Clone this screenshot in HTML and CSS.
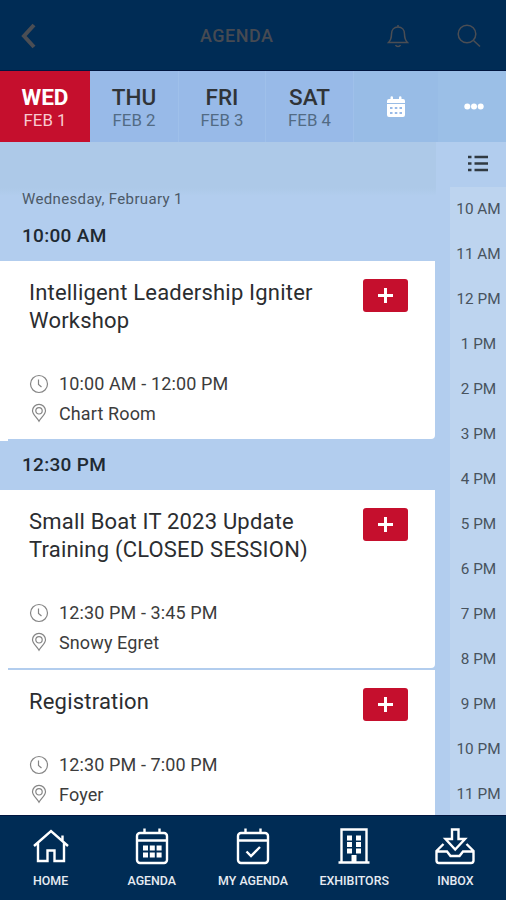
FILE: index.html
```html
<!DOCTYPE html>
<html lang="en">
<head>
    <meta charset="UTF-8">
    <title>Agenda</title>
    <link rel="stylesheet" href="styles.css">
</head>
<body>
    <!-- Shared icons -->
    <svg class="icon-defs" width="0" height="0">
        <symbol id="clock" viewBox="0 0 20 20">
            <circle cx="10" cy="10" r="8.5"/>
            <path d="M9.5 5.5v5l3 2.5"/>
        </symbol>
        <symbol id="pin" viewBox="0 0 20 20">
            <path d="M10 18.3C8 14.5 3.5 11.5 3.5 7.8a6.500 6.500 0 0 1 13 0C16.500 11.500 12 14.500 10 18.300z"/>
            <circle cx="10" cy="7.8" r="3.2"/>
        </symbol>
    </svg>

    <!-- Header -->
    <header>
        <svg class="back" width="16" height="26" viewBox="0 0 16 26"><path d="M13 2L3 13l10 11"/></svg>
        <h1>AGENDA</h1>
        <svg class="bell" width="22" height="24" viewBox="0 0 22 24"><path d="M1.5 18.5c2-2 3-4 3-8.500 0-4 2.500-7 6.500-7s6.500 3 6.500 7c0 4.500 1 6.500 3 8.500zM11 3V1M8.500 21c1 2 4 2 5 0"/></svg>
        <svg class="search" width="24" height="24" viewBox="0 0 24 24"><circle cx="10" cy="10" r="8.8"/><path d="M16.5 16.5l6.500 6"/></svg>
    </header>

    <!-- Day tabs -->
    <nav class="days">
        <a class="day active"><b>WED</b><span>FEB 1</span></a>
        <a class="day"><b>THU</b><span>FEB 2</span></a>
        <a class="day"><b>FRI</b><span>FEB 3</span></a>
        <a class="day"><b>SAT</b><span>FEB 4</span></a>
        <a class="tool">
            <svg width="18" height="21" viewBox="0 0 18 21">
                <path fill="#fff" d="M2 3h1.5V1.500a1.200 1.200 0 0 1 2.500 0V3h6V1.500a1.200 1.200 0 0 1 2.500 0V3H16a2 2 0 0 1 2 2v2H0V5a2 2 0 0 1 2-2zM0 8h18v11a2 2 0 0 1-2 2H2a2 2 0 0 1-2-2z"/>
                <path fill="#98bae8" d="M3 11h2.5v2H3zM7.800 11h2.500v2H7.800zM12.500 11H15v2h-2.500zM3 16h2.500v2H3zM7.800 16h2.500v2H7.800zM12.500 16H15v2h-2.500z"/>
            </svg>
        </a>
        <a class="tool more">
            <svg width="20" height="7" viewBox="0 0 20 7"><circle cx="3.3" cy="3.5" r="3"/><circle cx="10" cy="3.5" r="3"/><circle cx="16.7" cy="3.5" r="3"/></svg>
        </a>
    </nav>

    <main>
        <!-- Session list -->
        <section class="sessions">
            <p class="date">Wednesday, February 1</p>
            <h2>10:00 AM</h2>
            <article class="card">
                <div class="card-top">
                    <h3>Intelligent Leadership Igniter Workshop</h3>
                    <button class="add"><svg width="15" height="15" viewBox="0 0 15 15"><path d="M7.5 0v15M0 7.5h15"/></svg></button>
                </div>
                <p><svg class="meta"><use href="#clock"/></svg>10:00 AM - 12:00 PM</p>
                <p><svg class="meta"><use href="#pin"/></svg>Chart Room</p>
            </article>

            <h2 class="second">12:30 PM</h2>
            <article class="card">
                <div class="card-top">
                    <h3>Small Boat IT 2023 Update Training (CLOSED SESSION)</h3>
                    <button class="add"><svg width="15" height="15" viewBox="0 0 15 15"><path d="M7.5 0v15M0 7.5h15"/></svg></button>
                </div>
                <p><svg class="meta"><use href="#clock"/></svg>12:30 PM - 3:45 PM</p>
                <p><svg class="meta"><use href="#pin"/></svg>Snowy Egret</p>
            </article>
            <article class="card short">
                <div class="card-top">
                    <h3>Registration</h3>
                    <button class="add"><svg width="15" height="15" viewBox="0 0 15 15"><path d="M7.5 0v15M0 7.5h15"/></svg></button>
                </div>
                <p><svg class="meta"><use href="#clock"/></svg>12:30 PM - 7:00 PM</p>
                <p><svg class="meta"><use href="#pin"/></svg>Foyer</p>
            </article>
        </section>

        <!-- Hour rail -->
        <aside>
            <div class="list-btn">
                <svg width="20" height="17" viewBox="0 0 20 17"><path d="M0 2h3.5M0 8.5h3.5M0 15h3.5M6.5 2H20M6.5 8.5H20M6.5 15H20"/></svg>
            </div>
            <ul>
                <li>10 AM</li>
                <li>11 AM</li>
                <li>12 PM</li>
                <li>1 PM</li>
                <li>2 PM</li>
                <li>3 PM</li>
                <li>4 PM</li>
                <li>5 PM</li>
                <li>6 PM</li>
                <li>7 PM</li>
                <li>8 PM</li>
                <li>9 PM</li>
                <li>10 PM</li>
                <li>11 PM</li>
            </ul>
        </aside>
    </main>

    <!-- Bottom navigation -->
    <footer>
        <a>
            <svg viewBox="0 0 40 40"><path d="M3 19L20 4l17 15M7 16v18h9.500V23.500h7V34H33V16M31.500 14V8.500"/></svg>
            HOME
        </a>
        <a>
            <svg viewBox="0 0 40 40"><rect x="5" y="6" width="30" height="30" rx="3"/><path d="M5 13.5h30M12.500 1.500V6M27.500 1.500V6"/><path class="solid" d="M11 18.500h5v5h-5zM17.800 18.500h5v5h-5zM24.600 18.500h5v5h-5zM11 25.500h5v5h-5zM17.800 25.500h5v5h-5zM24.600 25.500h5v5h-5z"/></svg>
            AGENDA
        </a>
        <a>
            <svg viewBox="0 0 40 40"><rect x="5" y="6" width="30" height="30" rx="3"/><path d="M5 13.5h30M12.500 1.500V6M27.500 1.500V6M13.500 24.500l4.500 4.500 9-9"/></svg>
            MY AGENDA
        </a>
        <a>
            <svg viewBox="0 0 40 40"><path d="M7.5 35.500V2.500h25v33M4.500 35.500h31"/><path class="solid" d="M13 8.500h5v5h-5zM22 8.500h5v5h-5zM13 15h5v5h-5zM22 15h5v5h-5zM13 21.500h5v5h-5zM22 21.500h5v5h-5zM17.500 28h5v7h-5z"/></svg>
            EXHIBITORS
        </a>
        <a>
            <svg viewBox="0 0 40 40"><path d="M17 2.500h6.500V12H30l-9.800 10.500L10.500 12H17zM8.500 17L1.500 24v9.500q0 2.500 2.500 2.500h32q2.500 0 2.500-2.500V24L31.500 17M1.500 24.500H12l3.500 4.500h9l3.500-4.500h10.500"/></svg>
            INBOX
        </a>
    </footer>
</body>
</html>
```
FILE: styles.css
```css
* {
    box-sizing: border-box;
}

body {
    margin: 0;
    height: 900px;
    overflow: hidden;
    display: flex;
    flex-direction: column;
    font-family: Roboto, sans-serif;
    background-color: #b2cdee;
    color: #2b2d30;
}

h1, h2, h3, p, ul {
    margin: 0;
    padding: 0;
}

svg {
    fill: none;
    flex: none;
}

.icon-defs {
    position: absolute;
}

/* Header */
header {
    height: 71px;
    flex: none;
    display: flex;
    align-items: center;
    padding: 1px 25px 0 21px;
    background-color: #002c55;
    border-bottom: 1px solid #001640;
    color: #464a52;
}

header svg {
    stroke: #4b4e54;
    stroke-width: 1.5;
}

header .back {
    stroke-width: 4;
}

h1 {
    margin-left: 163px;
    flex: 1;
    font-size: 18px;
    font-weight: 500;
    letter-spacing: 0.5px;
}

.bell {
    margin-right: 48px;
}

/* Day tabs */
.days {
    height: 71px;
    flex: none;
    display: grid;
    grid-template-columns: 90px 89px 87px 88px 84px 68px;
    background-color: #98bae8;
}

.day {
    display: flex;
    flex-direction: column;
    align-items: center;
    padding-top: 12px;
    border-right: 1px solid #9fc0ea;
    color: #526b84;
}

.day b {
    font-size: 22.5px;
    line-height: 28px;
    font-weight: 500;
    color: #303438;
}

.day span {
    font-size: 16.8px;
    line-height: 18px;
}

.day.active {
    background-color: #c50f2d;
    border: 0;
    color: #f8cbd1;
}

.day.active b {
    color: #fff;
    font-weight: 700;
}

.tool {
    display: flex;
    align-items: center;
    justify-content: center;
    background-color: #98bce6;
}

.more {
    padding-left: 3px;
    background-color: #9bbfe7;
}

.more svg {
    fill: #fff;
}

/* Sessions */
main {
    flex: 1;
    min-height: 0;
    display: flex;
    overflow: hidden;
}

.sessions {
    width: 436px;
    background: linear-gradient(#adc9e8, #adc9e8 46px, #b2cdee 54px);
}

.date {
    padding: 47px 0 0 22px;
    font-size: 15px;
    line-height: 20px;
    letter-spacing: 0.35px;
    color: #4c5967;
}

h2 {
    height: 52px;
    padding: 13px 0 0 22px;
    font-size: 19px;
    line-height: 28px;
    font-weight: 500;
    letter-spacing: 0.3px;
    color: #202932;
}

h2.second {
    height: 49px;
    padding-top: 10px;
}

.card {
    position: relative;
    width: 435px;
    height: 178px;
    margin-bottom: 2px;
    padding: 18px 27px 0 29px;
    background-color: #fff;
    border-radius: 0 0 4px 0;
}

/* the divider starts 8px in */
.card::after {
    content: "";
    position: absolute;
    left: 0;
    bottom: -2px;
    width: 8px;
    height: 2px;
    background-color: #fff;
}

.card-top {
    height: 90px;
    display: flex;
    justify-content: space-between;
}

.short .card-top {
    height: 62px;
}

h3 {
    width: 300px;
    font-size: 22px;
    line-height: 28px;
    font-weight: 400;
    letter-spacing: 0.2px;
}

.add {
    width: 45px;
    height: 33px;
    padding: 0;
    display: flex;
    align-items: center;
    justify-content: center;
    background-color: #c50f2d;
    border: 0;
    border-radius: 3px;
}

.add svg {
    stroke: #fff;
    stroke-width: 3;
}

.card p {
    display: flex;
    align-items: center;
    height: 29.5px;
    font-size: 18px;
    letter-spacing: 0.12px;
    color: #3c3c3c;
}

.meta {
    width: 20px;
    height: 20px;
    margin-right: 10px;
    stroke: #858585;
    stroke-width: 1.2;
}

/* Hour rail */
aside {
    width: 70px;
    padding-left: 14px;
}

.list-btn {
    height: 45px;
    padding: 13px 0 0 18px;
}

.list-btn svg {
    display: block;
    stroke: #303a42;
    stroke-width: 2.6;
}

aside ul {
    list-style: none;
    background-color: #bdd4ef;
}

aside li {
    height: 45px;
    padding-left: 1px;
    text-align: center;
    font-size: 15.3px;
    line-height: 44px;
    color: #48535e;
}

/* Bottom navigation */
footer {
    height: 85px;
    flex: none;
    display: grid;
    grid-template-columns: repeat(5, 1fr);
    background-color: #002c55;
    border-top: 1px solid #001640;
    color: #e6ebf2;
}

footer a {
    display: flex;
    flex-direction: column;
    align-items: center;
    padding-top: 11px;
    font-size: 12.4px;
    line-height: 14px;
    font-weight: 500;
    white-space: nowrap;
}

footer svg {
    width: 40px;
    height: 40px;
    margin-bottom: 7px;
    stroke: #fff;
    stroke-width: 2.4;
}

footer .solid {
    fill: #fff;
    stroke: none;
}
```
